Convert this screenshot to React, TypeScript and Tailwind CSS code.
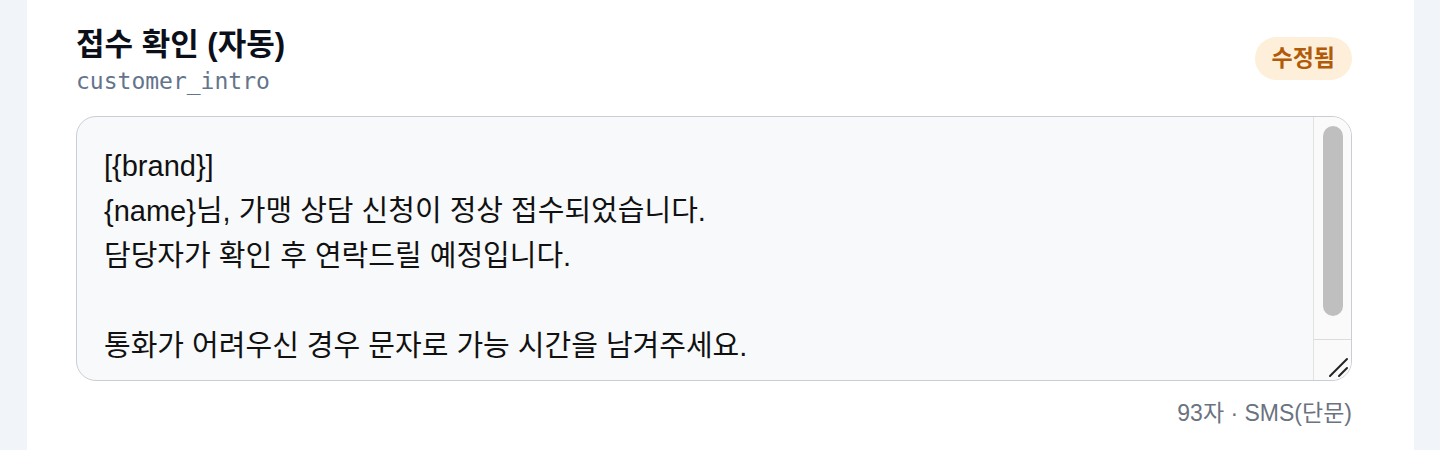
import React from 'react';

const SANS = "font-['Liberation_Sans','Noto_Sans_CJK_KR',sans-serif]";

const lines = [
  '[{brand}]',
  '{name}님, 가맹 상담 신청이 정상 접수되었습니다.',
  '담당자가 확인 후 연락드릴 예정입니다.',
  '',
  '통화가 어려우신 경우 문자로 가능 시간을 남겨주세요.',
];

const FakeScrollbar: React.FC = () => (
  <div className="flex w-[38px] shrink-0 flex-col border-l border-[#e2e2e2] bg-[#fafafa]">
    <div className="flex flex-1 justify-center pt-[9px]">
      <div className="h-[190px] w-[20px] rounded-full bg-[#bfbfbf]" />
    </div>
    <div className="flex h-[41px] items-end justify-end border-t border-[#dcdcdc]">
      <svg width="22" height="22" viewBox="0 0 22 22" className="mb-[2px] mr-[2px]">
        <path d="M3 20 L20 3" stroke="#222" strokeWidth="2" strokeLinecap="round" />
        <path d="M12 20 L20 12" stroke="#222" strokeWidth="2" strokeLinecap="round" />
      </svg>
    </div>
  </div>
);

export default function App() {
  const count = lines.join('\n').length;

  return (
    <div className={`min-h-[450px] bg-[#f1f4f9] pl-[27px] pr-[26px] ${SANS}`}>
      <div className="min-h-[450px] bg-white pb-8 pl-[49px] pr-[62px] pt-[26px]">
        <div className="flex items-start justify-between">
          <div>
            <h2 className="text-[31px] font-bold leading-[38px] text-[#0b0f19]">접수 확인 (자동)</h2>
            <p className="mt-[1px] font-['DejaVu_Sans_Mono',monospace] text-[23px] leading-[32px] text-[#64748b]">
              customer_intro
            </p>
          </div>
          <span className="mt-[11px] flex h-[43px] items-center rounded-full bg-[#fdefd9] px-[17px] text-[23px] font-bold text-[#b25a07]">
            수정됨
          </span>
        </div>

        <div className="mt-[19px] flex h-[265px] overflow-hidden rounded-[20px] border-[1.5px] border-[#c9ced6] bg-[#f8f9fb]">
          <div className="flex-1 overflow-hidden pl-[27px] pt-[27px] text-[29px] leading-[45px] text-[#111]">
            {lines.map((line, i) => (
              <div key={i} className="h-[45px] whitespace-pre">
                {line}
              </div>
            ))}
          </div>
          <FakeScrollbar />
        </div>

        <div className="mt-[19px] text-right text-[23px] leading-[26px] text-[#6b7280]">
          {count}자 · SMS(단문)
        </div>
      </div>
    </div>
  );
}
